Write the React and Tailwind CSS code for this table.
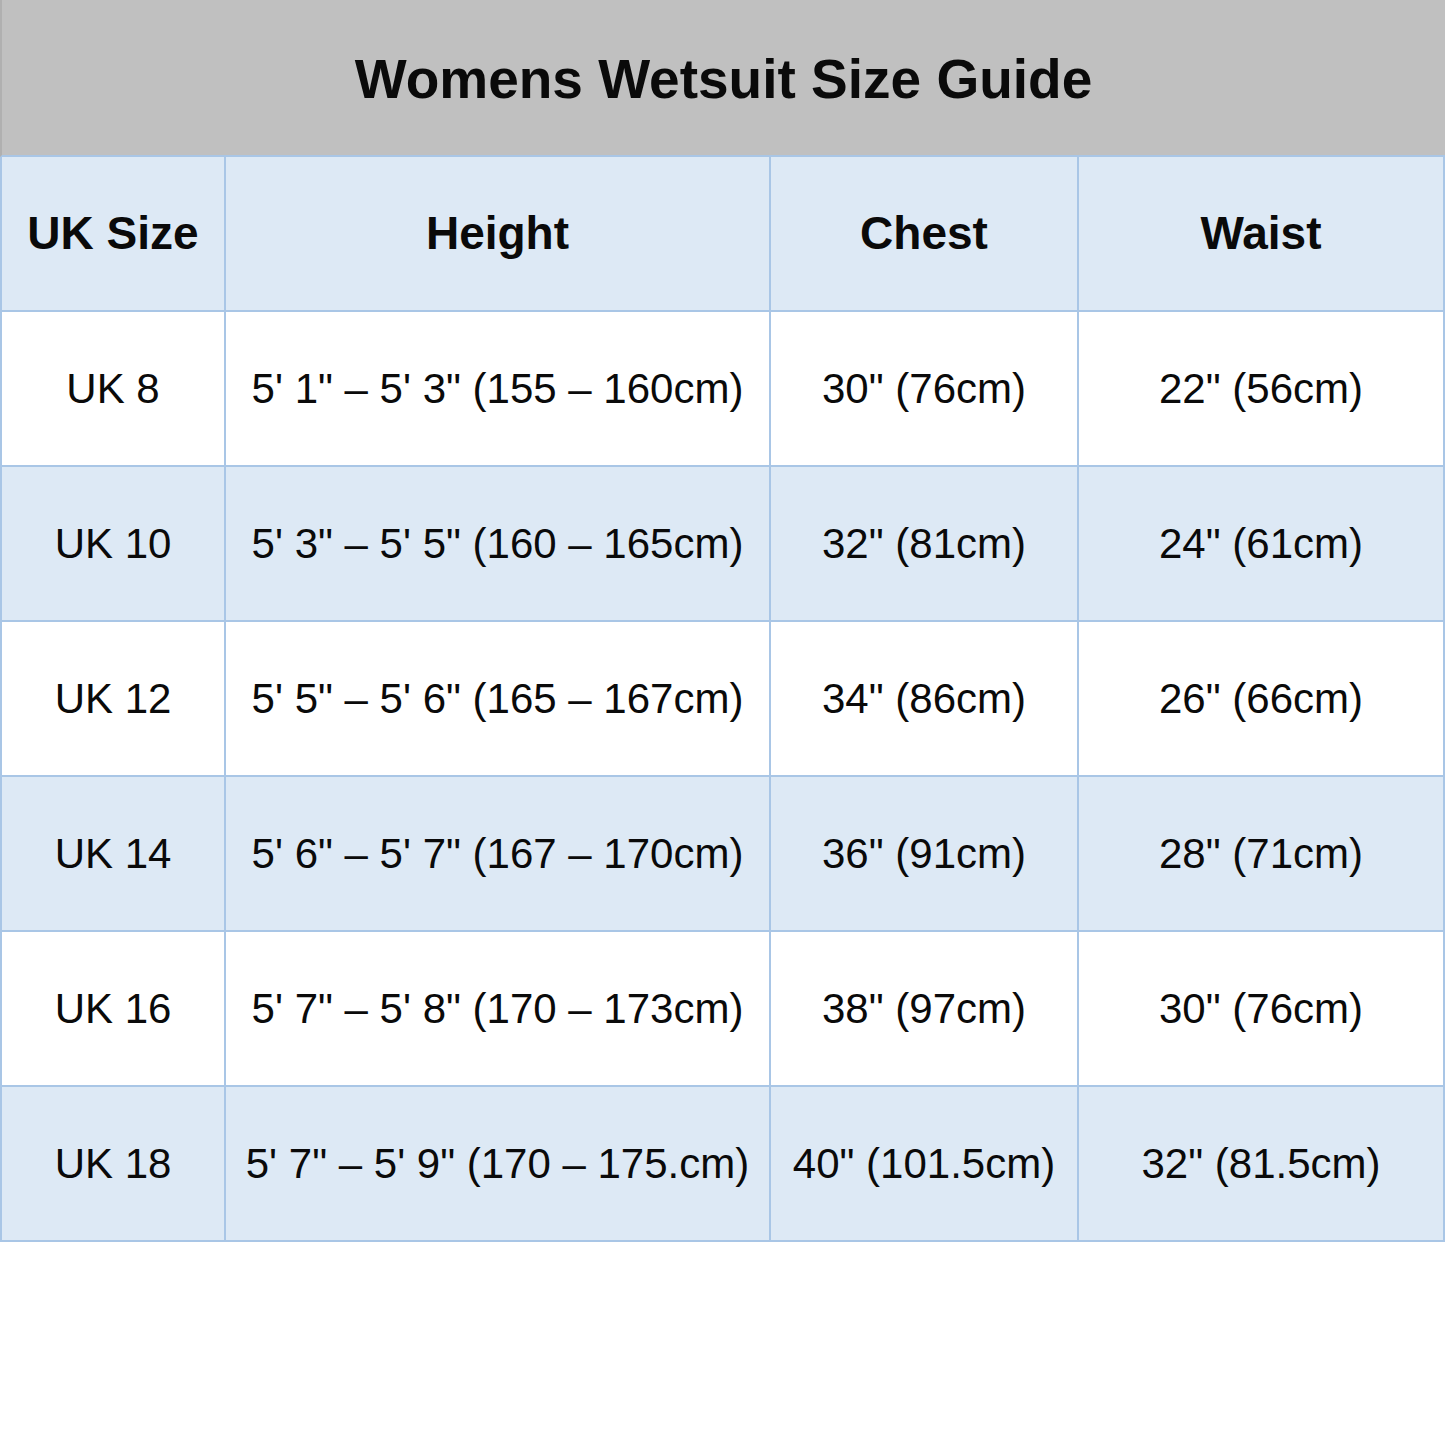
const rows = [
  ["UK 8", "5' 1\" – 5' 3\" (155 – 160cm)", "30\" (76cm)", "22\" (56cm)"],
  ["UK 10", "5' 3\" – 5' 5\" (160 – 165cm)", "32\" (81cm)", "24\" (61cm)"],
  ["UK 12", "5' 5\" – 5' 6\" (165 – 167cm)", "34\" (86cm)", "26\" (66cm)"],
  ["UK 14", "5' 6\" – 5' 7\" (167 – 170cm)", "36\" (91cm)", "28\" (71cm)"],
  ["UK 16", "5' 7\" – 5' 8\" (170 – 173cm)", "38\" (97cm)", "30\" (76cm)"],
  ["UK 18", "5' 7\" – 5' 9\" (170 – 175.cm)", "40\" (101.5cm)", "32\" (81.5cm)"],
];

const cols = ["w-[226px] border-l-2", "w-[545px]", "w-[308px]", "flex-1"];

function Cell({ className, children }) {
  return (
    <div
      className={`flex h-[155px] items-center justify-center border-b-2 border-r-2 border-[#a9c6e6] ${className}`}
    >
      {children}
    </div>
  );
}

export default function App() {
  return (
    <div className="w-[1445px] h-[1445px] bg-white font-['Liberation_Sans',Arial,sans-serif] text-[#0a0a0a]">
      <div className="flex h-[157px] items-center justify-center border-b-2 border-l-2 border-[#a9c6e6] border-l-[#b0b0b0] bg-[#c0c0c0] pt-1">
        <h1 className="text-[55px] font-bold">Womens Wetsuit Size Guide</h1>
      </div>

      <div className="flex bg-[#dde9f5] text-[46px] font-bold">
        {["UK Size", "Height", "Chest", "Waist"].map((h, i) => (
          <Cell key={h} className={cols[i]}>
            {h}
          </Cell>
        ))}
      </div>

      {rows.map((r, ri) => (
        <div
          key={r[0]}
          className={`flex text-[42px] ${ri % 2 ? "bg-[#dde9f5]" : "bg-white"}`}
        >
          {r.map((v, i) => (
            <Cell key={i} className={cols[i]}>
              {v}
            </Cell>
          ))}
        </div>
      ))}
    </div>
  );
}
